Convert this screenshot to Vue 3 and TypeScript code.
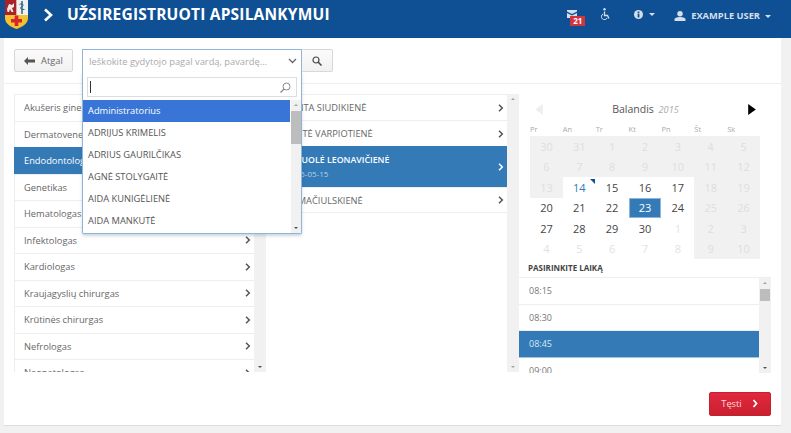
<script setup lang="ts">
const specialties = [
  "Akušeris ginekologas",
  "Dermatovenerologas",
  "Endodontologas",
  "Genetikas",
  "Hematologas",
  "Infektologas",
  "Kardiologas",
  "Kraujagyslių chirurgas",
  "Krūtinės chirurgas",
  "Nefrologas",
  "Neonatologas",
];
const doctors = [
  { name: "JOLANTA SIUDIKIENĖ" },
  { name: "DANUTĖ VARPIOTIENĖ" },
  { name: "DANGUOLĖ LEONAVIČIENĖ", date: "Iki 2015-05-15", active: true },
  { name: "RITA MAČIULSKIENĖ" },
];
const options = [
  "Administratorius",
  "ADRIJUS KRIMELIS",
  "ADRIUS GAURILČIKAS",
  "AGNĖ STOLYGAITĖ",
  "AIDA KUNIGĖLIENĖ",
  "AIDA MANKUTĖ",
];
const weekdays = ["Pr", "An", "Tr", "Kt", "Pn", "Št", "Sk"];
const days = [
  30, 31, 1, 2, 3, 4, 5, 6, 7, 8, 9, 10, 11, 12, 13, 14, 15, 16, 17, 18, 19, 20, 21, 22, 23, 24,
  25, 26, 27, 28, 29, 30, 1, 2, 3, 4, 5, 6, 7, 8, 9, 10,
];
const times = ["08:15", "08:30", "08:45", "09:00"];

// 14–17, 20–24, 27–30 are the open days of April
function dayClass(i: number) {
  const open = (i >= 15 && i <= 18) || (i >= 21 && i <= 25) || (i >= 28 && i <= 31);
  const col = i % 7;
  return {
    open,
    white: !open && i >= 32 && col < 5,
    picked: i === 24,
    today: i === 15,
  };
}
</script>

<template>
  <div class="page">
    <header class="topbar">
      <svg class="crest" width="23" height="29" viewBox="0 0 23 29">
        <path d="M0 0h23v18c0 6-6 9-11.500 11C6 27 0 24 0 18z" fill="#f2c230" />
        <rect width="11.500" height="15" fill="#a8222c" />
        <rect x="11.500" width="11.500" height="15" fill="#eef1f4" />
        <path d="M2 9l2-5 3 1 2-2v4L7 8l1.500 4H6.500L5 9l-1 3H2.500z" fill="#f3ece4" />
        <path d="M17 1v13" stroke="#31597f" stroke-width="1.400" />
        <path d="M14.500 4.500c3-2 5 1 2.500 2s-2 3 2.500 3" fill="none" stroke="#31597f" />
        <rect x="6" y="19" width="11" height="3.500" fill="#d8232a" />
        <rect x="9.700" y="15.500" width="3.600" height="10.500" fill="#d8232a" />
      </svg>
      <svg class="crumb" width="11" height="14" viewBox="0 0 11 14">
        <path d="M2 1.500L8 7l-6 5.500" fill="none" stroke="#fff" stroke-width="2.600" />
      </svg>
      <h1 class="title">UŽSIREGISTRUOTI APSILANKYMUI</h1>
      <nav class="tools">
        <span class="mail">
          <svg width="10" height="8" viewBox="0 0 10 8">
            <path d="M0 0h10v1.500L5 4 0 1.500zM0 3l5 2.500L10 3v5H0z" fill="#d5dfea" />
          </svg>
          <b class="badge">21</b>
        </span>
        <svg class="wheel" width="11" height="12" viewBox="0 0 11 12">
          <circle cx="4.500" cy="1.200" r="1.200" fill="#d5dfea" />
          <path d="M4.500 3.500v4h3l1.500 3" fill="none" stroke="#d5dfea" stroke-width="1.300" />
          <path d="M3 6a3 3 0 1 0 4.200 3.800" fill="none" stroke="#d5dfea" />
        </svg>
        <span class="info">
          <svg width="9" height="9" viewBox="0 0 10 10">
            <circle cx="5" cy="5" r="5" fill="#d5dfea" />
            <rect x="4" y="1.700" width="2" height="1.600" fill="#0f5094" />
            <rect x="4" y="4" width="2" height="4.300" fill="#0f5094" />
          </svg>
          <i class="caret" />
        </span>
        <span class="user">
          <svg width="12" height="10" viewBox="0 0 12 11">
            <circle cx="6" cy="3" r="3" fill="#d5dfea" />
            <path d="M0 11V9c0-1.500 3-2.500 6-2.500s6 1 6 2.500v2z" fill="#d5dfea" />
          </svg>
          EXAMPLE USER
          <i class="caret" />
        </span>
      </nav>
    </header>

    <main class="card">
      <div class="toolbar">
        <button class="back">
          <svg width="11" height="8" viewBox="0 0 11 8">
            <path d="M4 0v2.500h7v3H4V8L0 4z" fill="#555" />
          </svg>
          Atgal
        </button>
        <div class="picker">
          <div class="picker-box">
            <span>Ieškokite gydytojo pagal vardą, pavardę...</span>
            <svg width="9" height="6" viewBox="0 0 9 6">
              <path d="M1 1l3.500 3.500L8 1" fill="none" stroke="#666" stroke-width="1.300" />
            </svg>
          </div>
          <div class="picker-drop">
            <div class="picker-search">
              <i class="cursor" />
              <svg width="11" height="11" viewBox="0 0 11 11">
                <circle cx="6.500" cy="4.500" r="3.500" fill="none" stroke="#888" />
                <path d="M4 7l-3.500 3.500" stroke="#888" stroke-width="1.200" />
              </svg>
            </div>
            <div class="picker-list">
              <ul>
                <li v-for="(o, i) in options" :key="o" :class="{ hot: i === 0 }">{{ o }}</li>
              </ul>
              <div class="scrollbar">
                <i class="up" />
                <i class="thumb drop-thumb" />
                <i class="down" />
              </div>
            </div>
          </div>
        </div>
        <button class="find">
          <svg width="10" height="10" viewBox="0 0 10 10">
            <circle cx="4" cy="4" r="3" fill="none" stroke="#444" stroke-width="1.200" />
            <path d="M6.300 6.300L9.500 9.500" stroke="#444" stroke-width="1.500" />
          </svg>
        </button>
      </div>

      <div class="columns">
        <section class="pane">
          <ul class="rows">
            <li v-for="(s, i) in specialties" :key="s" :class="{ active: i === 2 }">
              <span>{{ s }}</span>
              <svg width="6" height="8" viewBox="0 0 6 8">
                <path d="M1 .8L4.300 4 1 7.200" fill="none" stroke="currentColor" stroke-width="1.500" />
              </svg>
            </li>
          </ul>
          <div class="scrollbar">
            <i class="up" />
            <i class="down" />
          </div>
        </section>

        <section class="pane doctors">
          <ul class="rows">
            <li v-for="d in doctors" :key="d.name" :class="{ active: d.active, tall: d.date }">
              <span>
                {{ d.name }}
                <small v-if="d.date">{{ d.date }}</small>
              </span>
              <svg width="6" height="8" viewBox="0 0 6 8">
                <path d="M1 .8L4.300 4 1 7.200" fill="none" stroke="currentColor" stroke-width="1.500" />
              </svg>
            </li>
          </ul>
          <div class="scrollbar idle">
            <i class="up" />
            <i class="down" />
          </div>
        </section>

        <section class="side">
          <div class="calendar">
            <div class="month">
              <svg width="8" height="11" viewBox="0 0 9 13"><path d="M9 0v13L0 6.500z" fill="#eeeeee" /></svg>
              <span>Balandis <em>2015</em></span>
              <svg width="8" height="11" viewBox="0 0 9 13"><path d="M0 0v13l9-6.500z" fill="#000" /></svg>
            </div>
            <div class="weekdays">
              <span v-for="w in weekdays" :key="w">{{ w }}</span>
            </div>
            <div class="days">
              <span v-for="(d, i) in days" :key="i" :class="dayClass(i)">{{ d }}</span>
            </div>
          </div>
          <h2 class="pick-label">PASIRINKITE LAIKĄ</h2>
          <div class="times">
            <ul>
              <li v-for="(t, i) in times" :key="t" :class="{ active: i === 2 }">{{ t }}</li>
            </ul>
            <div class="scrollbar">
              <i class="up" />
              <i class="thumb time-thumb" />
              <i class="down" />
            </div>
          </div>
          <div class="actions">
            <button class="next">
              Tęsti
              <svg width="7" height="9" viewBox="0 0 7 9">
                <path d="M1.500 1l3 3.500-3 3.500" fill="none" stroke="#fff" stroke-width="1.800" />
              </svg>
            </button>
          </div>
        </section>
      </div>
    </main>
  </div>
</template>

<style>
html,
body {
  margin: 0;
  background: #f1f1f1;
}
</style>

<style scoped>
.page {
  width: 791px;
  height: 433px;
  overflow: hidden;
  font-family: "Open Sans", "Noto Sans", sans-serif;
  color: #555;
  font-size: 9.3px;
}
ul {
  list-style: none;
  margin: 0;
  padding: 0;
}
i {
  display: block;
}

.topbar {
  height: 38px;
  box-sizing: border-box;
  background: #0f5094;
  display: flex;
  align-items: flex-start;
  padding-left: 5px;
  color: #d5dfea;
}
.crest {
  flex: none;
}
.crumb {
  margin: 8px 0 0 15px;
}
.title {
  margin: 4px 0 0 13px;
  font-size: 15.5px;
  line-height: 21px;
  font-weight: 700;
  color: #fff;
  letter-spacing: 0.2px;
}
.tools {
  margin-left: auto;
  display: flex;
  align-items: flex-start;
  padding: 9px 20px 0 0;
}
.mail {
  position: relative;
  width: 18px;
  height: 17px;
  margin: 1px 15px 0 0;
}
.mail svg {
  position: absolute;
  left: 0;
  top: 0;
}
.badge {
  position: absolute;
  left: 3px;
  top: 6px;
  width: 15px;
  height: 10px;
  background: #d2343f;
  color: #fff;
  font-size: 8px;
  line-height: 10px;
  text-align: center;
}
.wheel {
  margin-top: -1px;
}
.info {
  display: flex;
  align-items: center;
  gap: 6px;
  margin: 1px 0 0 23px;
}
.user {
  display: flex;
  align-items: center;
  gap: 5px;
  margin: 1px 0 0 19px;
  font-size: 9.3px;
  line-height: 12px;
  font-weight: 700;
}
.caret {
  width: 0;
  height: 0;
  border: 3px solid transparent;
  border-top-color: #d5dfea;
  border-bottom: 0;
}

.card {
  width: 777px;
  height: 388px;
  margin-left: 4px;
  box-sizing: border-box;
  background: #fff;
  border-bottom: 1px solid #dcdcdc;
}
.toolbar {
  height: 46px;
  box-sizing: border-box;
  border-bottom: 1px solid #eee;
  padding: 11px 0 0 10px;
  display: flex;
  align-items: flex-start;
}
.back,
.find {
  font: inherit;
  height: 23px;
  box-sizing: border-box;
  background: linear-gradient(#fbfbfb, #f1f1f1);
  border: 1px solid #d8d8d8;
  border-radius: 2px;
  color: #666;
  padding: 0;
  display: flex;
  align-items: center;
  justify-content: center;
}
.back {
  width: 59px;
  gap: 6px;
}
.find {
  width: 32px;
  margin-left: -1px;
  border-left: 0;
}
.picker {
  position: relative;
  width: 220px;
  height: 23px;
  margin-left: 9px;
}
.picker-box {
  height: 23px;
  box-sizing: border-box;
  border: 1px solid #8fb6da;
  border-bottom: 0;
  background: #fff;
  display: flex;
  align-items: center;
  justify-content: space-between;
  padding: 0 4px 0 6px;
  color: #aaa;
  white-space: nowrap;
}
.picker-drop {
  position: absolute;
  z-index: 2;
  left: 0;
  top: 23px;
  width: 220px;
  height: 162px;
  box-sizing: border-box;
  background: #fff;
  border: 1px solid #8fb6da;
  border-top: 0;
  border-radius: 0 0 2px 2px;
  box-shadow: 0 2px 3px rgba(60, 90, 120, 0.25);
  padding-top: 5px;
}
.picker-search {
  height: 20px;
  box-sizing: border-box;
  margin: 0 4px;
  border: 1px solid #ddd;
  display: flex;
  align-items: center;
  justify-content: space-between;
  padding: 0 5px 0 2px;
}
.cursor {
  width: 1px;
  height: 12px;
  background: #333;
}
.picker-list {
  display: flex;
  height: 133px;
  margin-top: 3px;
}
.picker-list ul {
  flex: 1;
}
.picker-list li {
  height: 22px;
  line-height: 22px;
  padding-left: 5px;
  color: #555;
}
.picker-list li.hot {
  background: #3875d7;
  color: #fff;
}

.scrollbar {
  position: relative;
  flex: none;
  width: 12px;
  background: #f1f1f1;
}
.up,
.down {
  position: absolute;
  left: 4px;
  width: 0;
  height: 0;
  border: 2.5px solid transparent;
}
.up {
  top: 4px;
  border-top: 0;
  border-bottom-color: #a3a3a3;
}
.down {
  bottom: 4px;
  border-bottom: 0;
  border-top-color: #505050;
}
.idle .down {
  border-top-color: #a3a3a3;
}
.thumb {
  position: absolute;
  left: 1px;
  right: 1px;
  background: #bdbdbd;
}
.drop-thumb {
  top: 11px;
  height: 33px;
}
.time-thumb {
  top: 11px;
  height: 12px;
}
.picker-list .scrollbar {
  width: 10px;
  margin-left: 1px;
}
.picker-list .up,
.picker-list .down {
  left: 3px;
}
.picker-list .thumb {
  left: 0;
  right: 0;
}

.columns {
  display: flex;
  padding: 10px 0 0 10px;
}
.pane {
  display: flex;
  width: 252px;
  height: 278px;
  overflow: hidden;
}
.pane.doctors {
  width: 253px;
}
.rows {
  flex: 1;
}
.rows li {
  height: 26.5px;
  box-sizing: border-box;
  border-top: 1px solid #eee;
  border-left: 1px solid #eee;
  display: flex;
  align-items: center;
  justify-content: space-between;
  padding: 0 3px 0 9px;
  color: #666;
  white-space: nowrap;
}
.rows li svg {
  flex: none;
  color: #555;
}
.doctors .rows li {
  height: 26px;
}
.doctors .rows li.tall {
  height: 41px;
}
.doctors .rows li:last-child {
  border-bottom: 1px solid #eee;
}
.rows li.active {
  background: #337ab7;
  border-color: #337ab7;
  color: #fff;
}
.rows li.active svg {
  color: #fff;
}
.rows li.tall span {
  font-size: 8.8px;
  font-weight: 600;
  line-height: 13px;
}
.rows small {
  display: block;
  font-size: 8px;
  font-weight: 400;
  color: #b5cfe6;
}

.side {
  width: 252px;
  flex: none;
}
.calendar {
  width: 230px;
  margin-left: 11px;
}
.month {
  height: 26px;
  margin-top: 2px;
  display: flex;
  align-items: center;
  justify-content: space-between;
  padding: 0 4px 0 5px;
  font-size: 10.5px;
  color: #555;
}
.month em {
  font-size: 9.2px;
  color: #aaa;
  margin-left: 2px;
}
.weekdays {
  display: grid;
  grid-template-columns: repeat(7, 1fr);
  height: 14px;
  font-size: 7.5px;
  line-height: 14px;
  color: #aaa;
}
.days {
  display: grid;
  grid-template-columns: repeat(7, 1fr);
  grid-auto-rows: 20.5px;
  background: #f1f1f1;
}
.days span {
  display: flex;
  align-items: center;
  justify-content: center;
  color: #dedede;
  font-size: 11px;
  position: relative;
}
.days .open,
.days .white {
  background: #fff;
}
.days .open {
  color: #444;
}
.days .white {
  color: #e2e2e2;
}
.days .today {
  color: #337ab7;
}
.days .today::after {
  content: "";
  position: absolute;
  top: 2px;
  right: 1px;
  border-top: 5px solid #0f5094;
  border-left: 5px solid transparent;
}
.days .picked {
  background: #337ab7;
  color: #fff;
  box-shadow: inset 0 0 0 1px #8fb6da;
}
.pick-label {
  margin: 1px 0 0 9px;
  height: 17px;
  font-size: 8px;
  line-height: 15px;
  font-weight: 700;
  color: #444;
}
.times {
  display: flex;
  height: 95px;
  overflow: hidden;
  border-top: 1px solid #eee;
}
.times ul {
  flex: 1;
}
.times li {
  height: 26.5px;
  box-sizing: border-box;
  border-bottom: 1px solid #eee;
  line-height: 26px;
  padding-left: 10px;
  font-size: 9px;
  color: #777;
}
.times li.active {
  background: #337ab7;
  border-color: #9cc3e0;
  color: #dbe8f3;
}
.actions {
  display: flex;
  justify-content: flex-end;
  padding-top: 19px;
}
.next {
  font: inherit;
  width: 62px;
  height: 24px;
  background: linear-gradient(#e1293e, #c9202f);
  border: 1px solid #c4202e;
  border-radius: 2px;
  color: #fbdcdc;
  padding: 0 0 2px;
  display: flex;
  align-items: center;
  justify-content: center;
  gap: 10px;
}
</style>
